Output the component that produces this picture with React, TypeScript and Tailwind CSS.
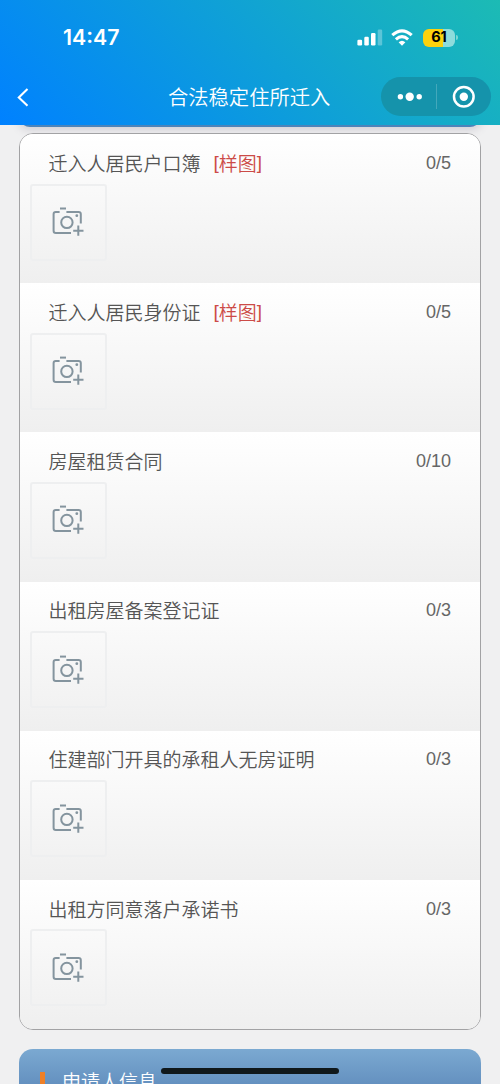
import React from "react";

type Item = { label: string; sample?: boolean; count: string };

const items: Item[] = [
  { label: "迁入人居民户口簿", sample: true, count: "0/5" },
  { label: "迁入人居民身份证", sample: true, count: "0/5" },
  { label: "房屋租赁合同", count: "0/10" },
  { label: "出租房屋备案登记证", count: "0/3" },
  { label: "住建部门开具的承租人无房证明", count: "0/3" },
  { label: "出租方同意落户承诺书", count: "0/3" },
];

function CameraIcon() {
  return (
    <svg width="32" height="30" viewBox="0 0 32 30" fill="none" stroke="#84949e" strokeWidth="2">
      <path d="M8 1.6h6" />
      <path d="M7.6 4.9H3.8Q1.6 4.9 1.6 7.1v16.7Q1.6 26 3.8 26H19" />
      <path d="M14.4 4.9h12.2Q28.8 4.9 28.8 7.1v9.4" />
      <circle cx="14.9" cy="15.4" r="5.7" />
      <circle cx="24.8" cy="8.7" r="1.4" fill="#84949e" stroke="none" />
      <path d="M21.2 23.7h10.3M26.3 18.6v10.2" />
    </svg>
  );
}

function StatusBar() {
  return (
    <div className="flex h-[70px] items-center pt-[5px] pr-[42px] pl-[63px] text-white">
      <div className="font-['Inter'] text-[21.3px] leading-none font-semibold">14:47</div>
      <svg className="ml-auto" width="26" height="17" viewBox="0 0 26 17" fill="#fff">
        <rect x="0.4" y="10.7" width="4.7" height="5.8" rx="1.2" />
        <rect x="7.3" y="7.7" width="4.5" height="8.8" rx="1.2" />
        <rect x="14" y="4.1" width="4.5" height="12.4" rx="1.2" />
        <rect x="20.7" y="0.6" width="4.5" height="15.9" rx="1.2" opacity="0.3" />
      </svg>
      <svg className="ml-[8px]" width="22" height="17" viewBox="0 0 22 17" fill="none" stroke="#fff" strokeWidth="3.1">
        <path d="M1.3 6.2Q11 -2.4 20.7 6.2" />
        <path d="M4.9 10.4Q11 5 17.1 10.4" />
        <path d="M11 16.8L7.6 13.3Q11 10.2 14.4 13.3Z" fill="#fff" stroke="none" />
      </svg>
      <div className="ml-[10px] flex h-[18px] w-[32px] items-center justify-center rounded-[6px] bg-[linear-gradient(90deg,#fdd20d_61%,#8edcdc_61%)] font-['Inter'] text-[14.5px] leading-none font-bold text-black">
        61
      </div>
      <div className="ml-px h-[5px] w-[2px] rounded-r-full bg-[#7dd6d2]" />
    </div>
  );
}

function NavBar() {
  return (
    <div className="flex h-[55px] items-center pr-[9px] pb-[2px] pl-[17px]">
      <svg width="12" height="20" viewBox="0 0 12 20" fill="none" stroke="#fff" strokeWidth="2.1">
        <path d="M10.5 2L1.8 10.4L10.5 18.8" />
      </svg>
      <h1 className="ml-[139px] text-[20.3px] leading-none font-[350] whitespace-nowrap text-white">合法稳定住所迁入</h1>
      <div className="ml-auto flex h-[39px] w-[110px] items-center rounded-full bg-[#1593ab]">
        <svg width="110" height="39" viewBox="0 0 110 39" fill="#fff">
          <circle cx="19.4" cy="19.8" r="2.7" />
          <circle cx="28.7" cy="19.8" r="4.2" />
          <circle cx="38.2" cy="19.8" r="2.7" />
          <rect x="55" y="7" width="1" height="25" opacity="0.2" />
          <circle cx="82.8" cy="19.8" r="9.8" fill="none" stroke="#fff" strokeWidth="2.5" />
          <circle cx="82.8" cy="19.8" r="4.2" />
        </svg>
      </div>
    </div>
  );
}

function UploadRow({ item }: { item: Item }) {
  return (
    <section className="flex flex-1 flex-col bg-linear-to-b from-white to-[#efefef] pr-[29px] pl-[9.5px]">
      <div className="flex h-[49.5px] items-center pt-[7px] pl-[19px] text-[19px] leading-none font-[350] text-[#555]">
        <span>{item.label}</span>
        {item.sample && (
          <span className="ml-[13px] flex items-center text-[#cc4b47]">
            <span className="font-['Liberation_Sans']">[</span>样图
            <span className="font-['Liberation_Sans']">]</span>
          </span>
        )}
        <span className="ml-auto pt-px font-['Liberation_Sans'] text-[18px] font-normal text-[#666]">{item.count}</span>
      </div>
      <button className="flex h-[77px] w-[77px] items-center justify-center rounded-[3px] border-2 border-[#eeeff0]">
        <CameraIcon />
      </button>
    </section>
  );
}

export default function App() {
  return (
    <div className="relative flex h-[1084px] w-[500px] flex-col overflow-hidden bg-[#f0f0f1] font-['Noto_Sans_CJK_SC',sans-serif]">
      <header className="h-[125px] shrink-0 bg-[linear-gradient(45deg,#0081ff,#1cbbb4)]">
        <StatusBar />
        <NavBar />
      </header>
      <main className="flex flex-1 flex-col overflow-hidden px-[19px]">
        <div className="-mt-[20px] h-[21.5px] shrink-0 rounded-[14px] bg-[#4d83b9] shadow-[0_2px_8px_1px_rgba(100,90,120,0.22)]" />
        <div className="relative mt-[6.5px] flex h-[897px] w-[462px] shrink-0 flex-col overflow-hidden rounded-[14px] border border-[#a2a2a4] bg-white">
          {items.map((item) => (
            <UploadRow key={item.label} item={item} />
          ))}
        </div>
        <div className="mt-[19px] flex h-[60px] shrink-0 items-start rounded-t-[14px] bg-linear-to-b from-[#7ba9d1] to-[#5580b3] pt-[23px] pl-[21px]">
          <div className="h-[20px] w-[5px] bg-[#ee8028]" />
          <h2 className="-mt-px ml-[17px] text-[19px] leading-none font-[350] text-white">申请人信息</h2>
        </div>
      </main>
      <div className="absolute bottom-[10px] left-[161px] h-[6px] w-[178px] rounded-full bg-[#10181b]" />
    </div>
  );
}
